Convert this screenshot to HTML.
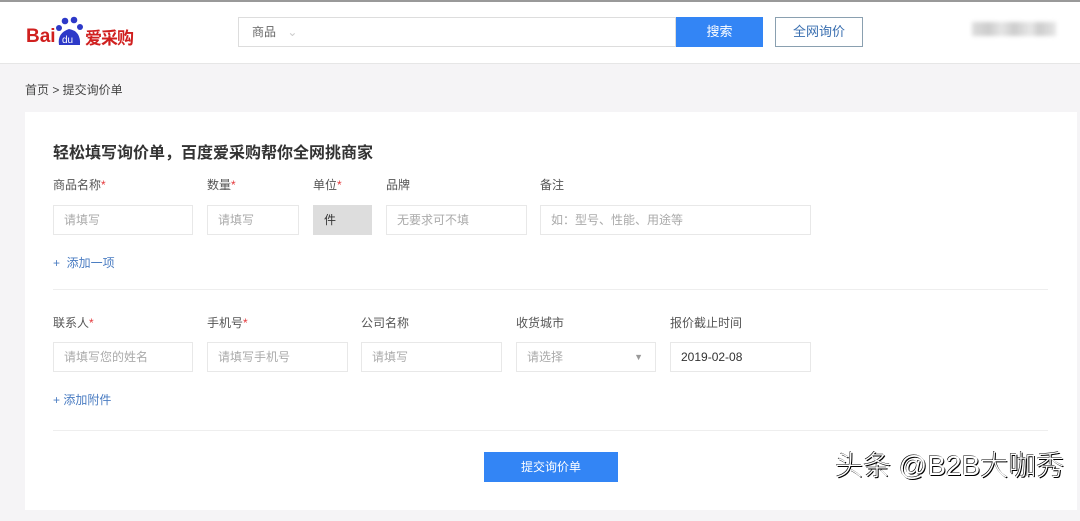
<!DOCTYPE html>
<html><head><meta charset="utf-8"><style>
*{margin:0;padding:0;box-sizing:border-box}
body{width:1080px;height:521px;overflow:hidden;background:#f5f4f6;font-family:"Liberation Sans","Noto Sans CJK SC",sans-serif;position:relative;color:#333}
.a{position:absolute}
.hdr{left:0;top:0;width:1080px;height:64px;background:#fff;border-top:2px solid #999;border-bottom:1px solid #e6e6e6}
.lbl{font-size:12px;color:#555}
.lbl i{color:#e4393c;font-style:normal}
.in{height:30px;border:1px solid #e8e8e8;background:#fff;font-size:12px;color:#aaa;line-height:28px;padding-left:10px}
.lnk{font-size:12px;color:#4a7cc2}
.hr{left:53px;width:995px;height:1px;background:#eee}
</style></head><body>
<div class="a hdr"></div>
<div class="a" style="left:26px;top:26px;font:bold 19px 'Liberation Sans',sans-serif;color:#d0201f">Bai</div>
<svg class="a" style="left:55px;top:16px" width="30" height="32" viewBox="0 0 30 32"><circle cx="10" cy="5" r="3.3" fill="#2d39c8"/><circle cx="19" cy="4" r="3.3" fill="#2d39c8"/><circle cx="4" cy="12" r="3" fill="#2d39c8"/><circle cx="25" cy="11" r="3" fill="#2d39c8"/><path d="M4 29 Q2 17 14 13 Q26 15 25 29 Z" fill="#2d39c8"/><text x="7" y="27" font-size="10" fill="#fff" font-family="Liberation Sans">du</text></svg>
<div class="a" style="left:85px;top:24px;font:bold 17px 'Noto Sans CJK SC',sans-serif;color:#d0201f;letter-spacing:-1px">爱采购</div>
<div class="a" style="left:238px;top:17px;width:438px;height:30px;border:1px solid #ddd;background:#fff;font-size:12px;color:#666;line-height:28px;padding-left:13px">商品 <span style="color:#ccc;margin-left:8px">⌄</span></div>
<div class="a" style="left:676px;top:17px;width:87px;height:30px;background:#3385f5;color:#fff;font-size:13px;text-align:center;line-height:30px">搜索</div>
<div class="a" style="left:775px;top:17px;width:88px;height:30px;border:1px solid #8aa0b0;color:#3a6fb0;font-size:13px;text-align:center;line-height:28px">全网询价</div>
<div class="a" style="left:972px;top:22px;width:84px;height:14px;background:linear-gradient(90deg,#ddd,#ccc 20%,#e6e6e6 35%,#ccc 50%,#e8e8e8 70%,#ccc 80%,#e6e6e6);filter:blur(2px)"></div>
<div class="a" style="left:25px;top:81px;font-size:12px;color:#444">首页 &gt; 提交询价单</div>
<div class="a" style="left:25px;top:112px;width:1052px;height:398px;background:#fff"></div>
<div class="a" style="left:53px;top:139px;font-size:16px;font-weight:bold;color:#333">轻松填写询价单，百度爱采购帮你全网挑商家</div>
<div class="a lbl" style="left:53px;top:176px">商品名称<i>*</i></div>
<div class="a lbl" style="left:207px;top:176px">数量<i>*</i></div>
<div class="a lbl" style="left:313px;top:176px">单位<i>*</i></div>
<div class="a lbl" style="left:386px;top:176px">品牌</div>
<div class="a lbl" style="left:540px;top:176px">备注</div>
<div class="a in" style="left:53px;top:205px;width:140px">请填写</div>
<div class="a in" style="left:207px;top:205px;width:92px">请填写</div>
<div class="a in" style="left:313px;top:205px;width:59px;background:#ddd;border-color:#ddd;color:#333">件</div>
<div class="a in" style="left:386px;top:205px;width:141px">无要求可不填</div>
<div class="a in" style="left:540px;top:205px;width:271px">如：型号、性能、用途等</div>
<div class="a lnk" style="left:53px;top:254px">+&nbsp; 添加一项</div>
<div class="a hr" style="top:289px"></div>
<div class="a lbl" style="left:53px;top:314px">联系人<i>*</i></div>
<div class="a lbl" style="left:207px;top:314px">手机号<i>*</i></div>
<div class="a lbl" style="left:361px;top:314px">公司名称</div>
<div class="a lbl" style="left:516px;top:314px">收货城市</div>
<div class="a lbl" style="left:670px;top:314px">报价截止时间</div>
<div class="a in" style="left:53px;top:342px;width:140px">请填写您的姓名</div>
<div class="a in" style="left:207px;top:342px;width:141px">请填写手机号</div>
<div class="a in" style="left:361px;top:342px;width:141px">请填写</div>
<div class="a in" style="left:516px;top:342px;width:140px">请选择<span style="position:absolute;right:12px;color:#999;font-size:9px">▼</span></div>
<div class="a in" style="left:670px;top:342px;width:141px;color:#333">2019-02-08</div>
<div class="a lnk" style="left:53px;top:391px">+ 添加附件</div>
<div class="a hr" style="top:430px"></div>
<div class="a" style="left:484px;top:452px;width:134px;height:30px;background:#3385f5;color:#fff;font-size:12px;text-align:center;line-height:30px">提交询价单</div>
<div class="a" style="left:835px;top:444px;font-size:28px;font-weight:300;color:#fff;text-shadow:1px 1px 0 #000,-0.5px -0.5px 0 #000;white-space:nowrap">头条 @B2B大咖秀</div>
</body></html>
